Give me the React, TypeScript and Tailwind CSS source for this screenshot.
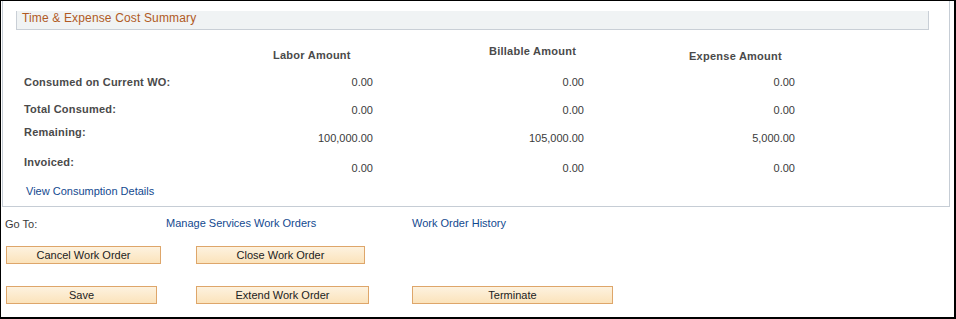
import React from 'react';

const rows = [
  { label: 'Consumed on Current WO:', labor: '0.00', billable: '0.00', expense: '0.00', shift: 'pt-0', height: 'h-[27px]' },
  { label: 'Total Consumed:', labor: '0.00', billable: '0.00', expense: '0.00', shift: 'pt-[1px]', height: 'h-[23px]' },
  { label: 'Remaining:', labor: '100,000.00', billable: '105,000.00', expense: '5,000.00', shift: 'pt-[6px]', height: 'h-[30px]' },
  { label: 'Invoiced:', labor: '0.00', billable: '0.00', expense: '0.00', shift: 'pt-[6px]', height: 'h-[29px]' },
];

const Button = ({ label, width }: { label: string; width: string }) => (
  <button
    className={`${width} h-[18px] border border-[#dea66a] bg-gradient-to-b from-[#fdf2df] to-[#fbe3bb] text-[11px] leading-[16px] text-[#222] text-center`}
  >
    {label}
  </button>
);

const App = () => {
  return (
    <div className="w-[956px] h-[319px] bg-white border-t border-l border-r-2 border-b-2 border-black font-['Liberation_Sans',Arial,sans-serif] overflow-hidden">
      {/* cost summary group box */}
      <div className="ml-[1px] pt-[10px] w-[948px] h-[206px] border-l border-r border-b border-[#c6cdd5]">
        <div className="ml-[13px] w-[913px] h-[19px] bg-[#f0f3f4] border-l border-r border-b border-[#c9cfd6] pl-[5px] text-[12px] leading-[14px] tracking-[0.15px] text-[#b05a24]">
          Time &amp; Expense Cost Summary
        </div>

        <div className="pl-[21px] mt-[15px] text-[11px] leading-[13px]">
          <div className="flex h-[31px] items-start font-bold text-[#4a4a4a] tracking-[0.25px] whitespace-nowrap">
            <div className="w-[249px]" />
            <div className="w-[100px] mt-[4px]">Labor Amount</div>
            <div className="w-[211px] pl-[116px]">Billable Amount</div>
            <div className="w-[211px] pl-[105px] mt-[5px]">Expense Amount</div>
          </div>

          {rows.map((row) => (
            <div key={row.label} className={`flex items-start ${row.height}`}>
              <div className="w-[249px] font-bold text-[#4a4a4a] tracking-[0.2px] whitespace-nowrap">{row.label}</div>
              <div className={`w-[100px] text-right text-[#3a3a3a] ${row.shift}`}>{row.labor}</div>
              <div className={`w-[211px] text-right text-[#3a3a3a] ${row.shift}`}>{row.billable}</div>
              <div className={`w-[211px] text-right text-[#3a3a3a] ${row.shift}`}>{row.expense}</div>
            </div>
          ))}

          <a className="ml-[2px] block text-[#13498f] cursor-pointer">View Consumption Details</a>
        </div>
      </div>

      {/* go to links */}
      <div className="flex mt-[10px] h-[13px] text-[11px] leading-[13px]">
        <div className="ml-[4px] w-[161px] mt-[1px] text-[#3a3a3a]">Go To:</div>
        <a className="w-[246px] text-[#13498f] cursor-pointer">Manage Services Work Orders</a>
        <a className="text-[#13498f] cursor-pointer">Work Order History</a>
      </div>

      {/* actions */}
      <div className="ml-[5px] mt-[16px] grid grid-cols-[190px_216px_201px] gap-y-[22px]">
        <Button label="Cancel Work Order" width="w-[155px]" />
        <Button label="Close Work Order" width="w-[169px]" />
        <div />
        <Button label="Save" width="w-[151px]" />
        <Button label="Extend Work Order" width="w-[173px]" />
        <Button label="Terminate" width="w-[201px]" />
      </div>
    </div>
  );
};

export default App;
